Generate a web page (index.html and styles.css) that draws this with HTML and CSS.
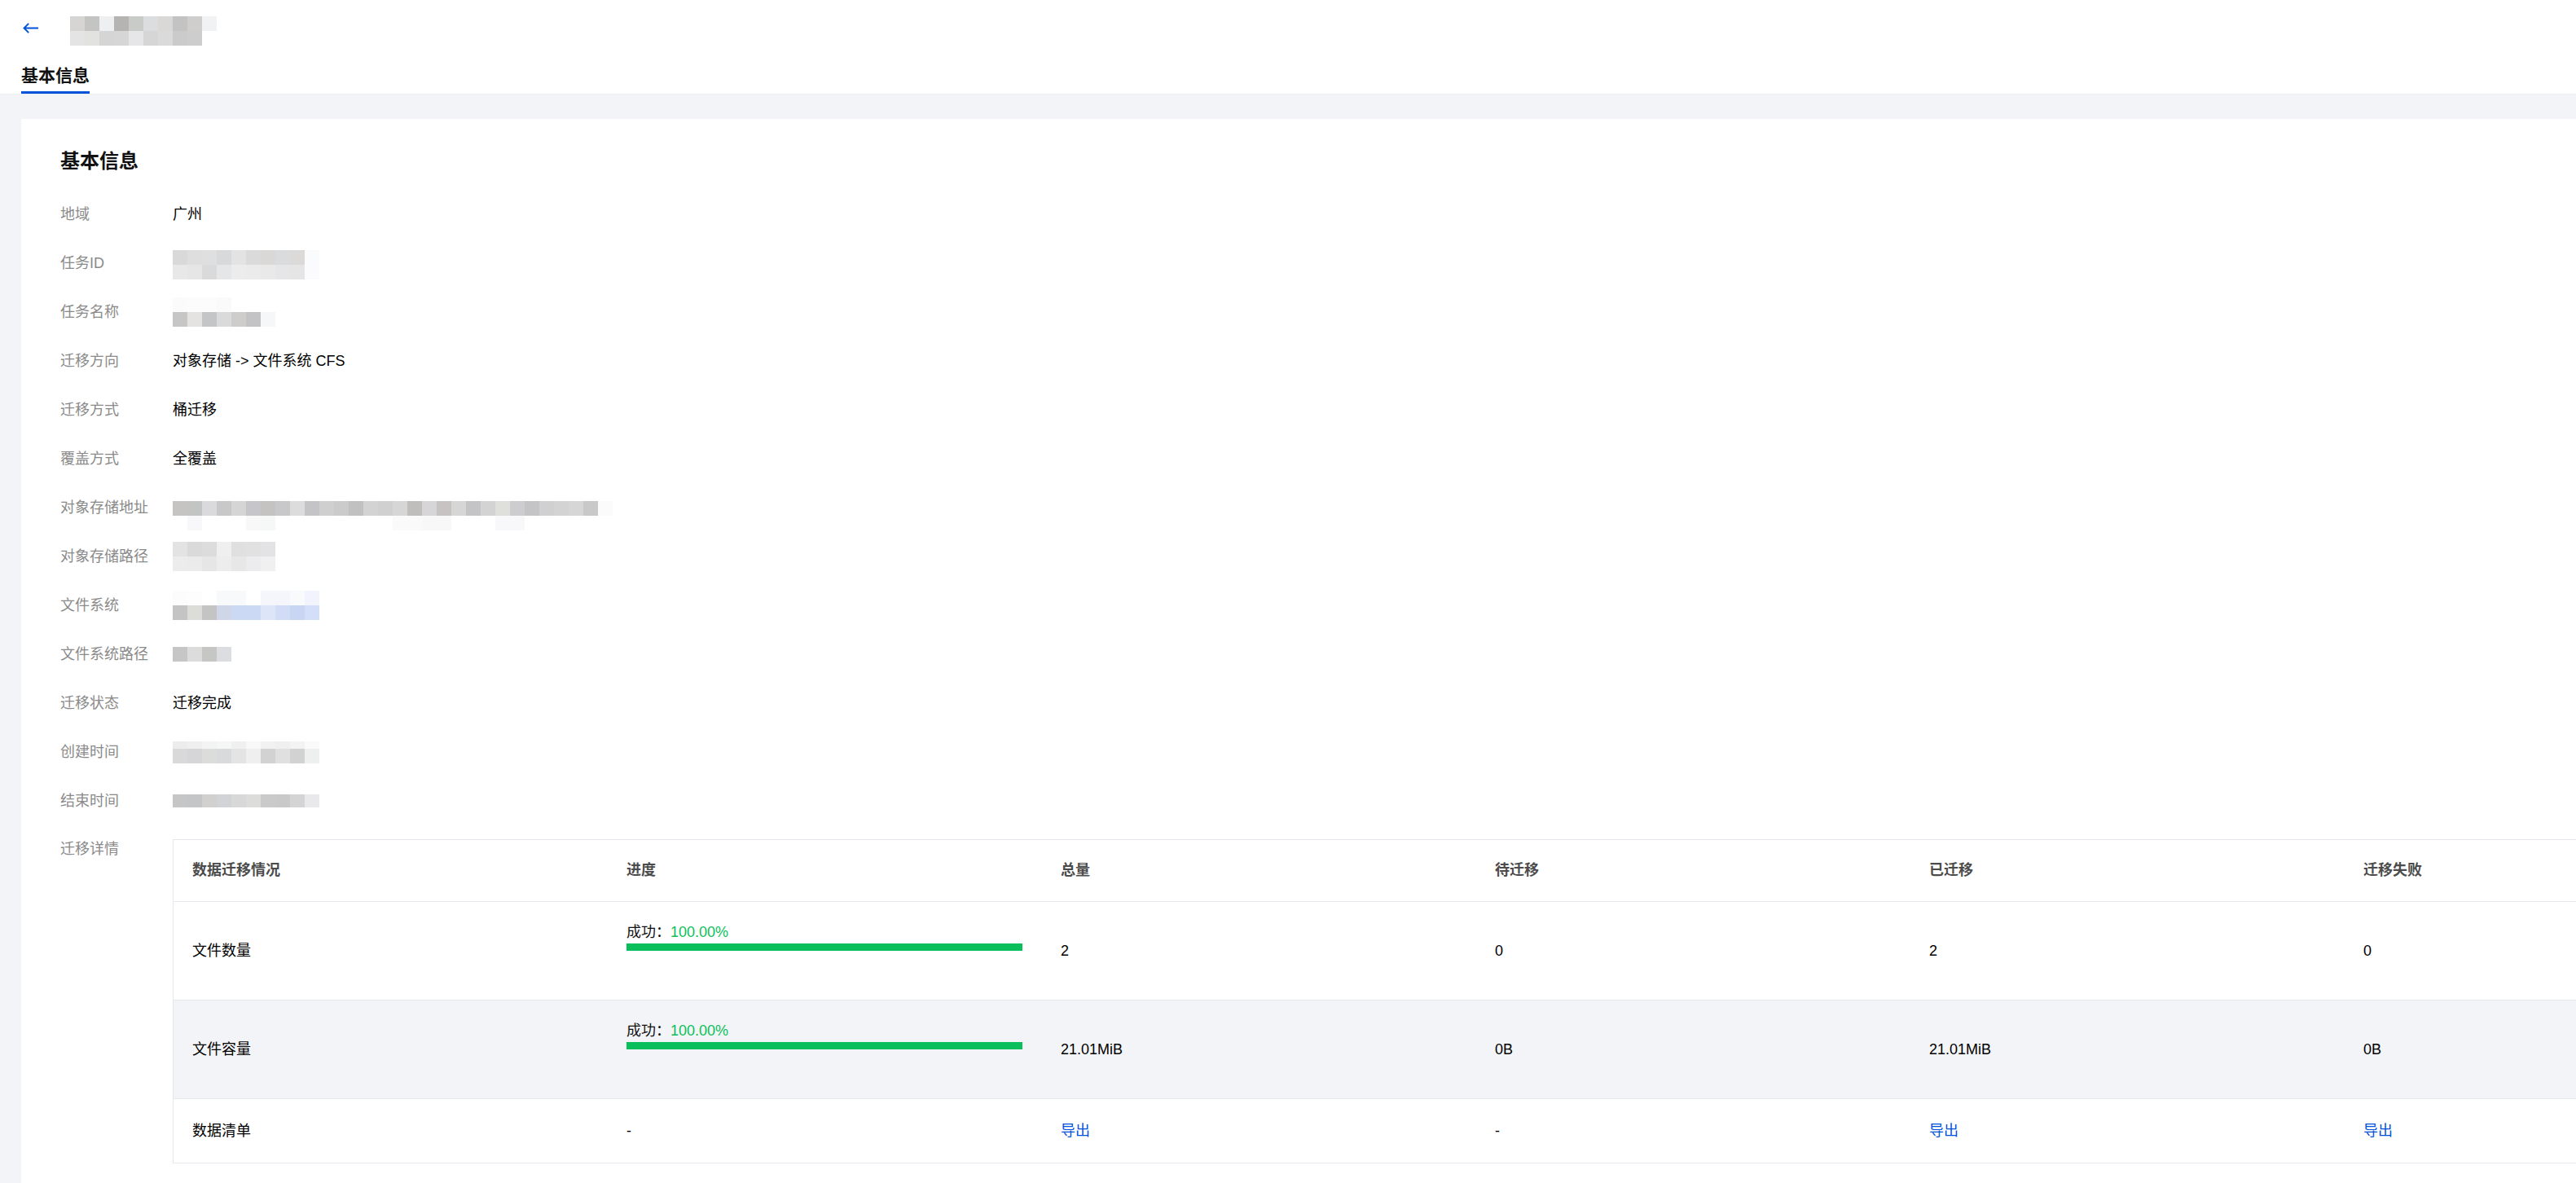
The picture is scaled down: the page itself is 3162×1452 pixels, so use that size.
FILE: index.html
```html
<!DOCTYPE html>
<html lang="zh-CN">
<head>
<meta charset="utf-8">
<title>基本信息</title>
<link rel="stylesheet" href="styles.css">
</head>
<body>
<header class="header">
  <div class="topbar">
    <svg class="back" viewBox="0 0 19 13" aria-hidden="true"><path d="M19 6.5H1.6M7.2 0.8L1.5 6.5L7.2 12.2" fill="none" stroke="#0052d9" stroke-width="1.9"/></svg>
    <span class="mz mz-title" aria-hidden="true"></span>
  </div>
  <nav class="tabs"><span class="tab">基本信息</span></nav>
</header>
<main class="main">
  <section class="card">
    <h2 class="card-title">基本信息</h2>
    <div class="row"><span class="label">地域</span><span class="value">广州</span></div>
    <div class="row"><span class="label">任务ID</span><span class="mz mz-id" aria-hidden="true"></span></div>
    <div class="row"><span class="label">任务名称</span><span class="mz mz-name" aria-hidden="true"></span></div>
    <div class="row"><span class="label">迁移方向</span><span class="value">对象存储 -&gt; 文件系统 CFS</span></div>
    <div class="row"><span class="label">迁移方式</span><span class="value">桶迁移</span></div>
    <div class="row"><span class="label">覆盖方式</span><span class="value">全覆盖</span></div>
    <div class="row"><span class="label">对象存储地址</span><span class="mz mz-addr" aria-hidden="true"></span></div>
    <div class="row"><span class="label">对象存储路径</span><span class="mz mz-path" aria-hidden="true"></span></div>
    <div class="row"><span class="label">文件系统</span><span class="mz mz-fs" aria-hidden="true"></span></div>
    <div class="row"><span class="label">文件系统路径</span><span class="mz mz-fspath" aria-hidden="true"></span></div>
    <div class="row"><span class="label">迁移状态</span><span class="value">迁移完成</span></div>
    <div class="row"><span class="label">创建时间</span><span class="mz mz-ctime" aria-hidden="true"></span></div>
    <div class="row"><span class="label">结束时间</span><span class="mz mz-etime" aria-hidden="true"></span></div>
    <div class="row row-top">
      <span class="label">迁移详情</span>
      <div class="dtable">
        <div class="drow dhead">
          <div class="cell">数据迁移情况</div>
          <div class="cell">进度</div>
          <div class="cell">总量</div>
          <div class="cell">待迁移</div>
          <div class="cell">已迁移</div>
          <div class="cell">迁移失败</div>
        </div>
        <div class="drow dbody">
          <div class="cell">文件数量</div>
          <div class="cell cell-progress">
            <div class="ptext">成功：<span class="pct">100.00%</span></div>
            <div class="pbar"><div class="pfill" style="width:100%"></div></div>
          </div>
          <div class="cell">2</div>
          <div class="cell">0</div>
          <div class="cell">2</div>
          <div class="cell">0</div>
        </div>
        <div class="drow dbody striped">
          <div class="cell">文件容量</div>
          <div class="cell cell-progress">
            <div class="ptext">成功：<span class="pct">100.00%</span></div>
            <div class="pbar"><div class="pfill" style="width:100%"></div></div>
          </div>
          <div class="cell">21.01MiB</div>
          <div class="cell">0B</div>
          <div class="cell">21.01MiB</div>
          <div class="cell">0B</div>
        </div>
        <div class="drow dlast">
          <div class="cell">数据清单</div>
          <div class="cell">-</div>
          <div class="cell"><a class="link" href="#">导出</a></div>
          <div class="cell">-</div>
          <div class="cell"><a class="link" href="#">导出</a></div>
          <div class="cell"><a class="link" href="#">导出</a></div>
        </div>
      </div>
    </div>
  </section>
</main>
</body>
</html>
```
FILE: styles.css
```css
html, body {
  margin: 0;
  padding: 0;
}
body {
  background: #f3f4f7;
  font-family: "Liberation Sans", "Noto Sans CJK SC", sans-serif;
  color: #000;
  overflow: hidden;
}

/* header */
.header {
  background: #fff;
  height: 116px;
  box-sizing: border-box;
  padding-left: 26px;
  border-bottom: 1px solid #eceef2;
}
.topbar {
  display: flex;
  align-items: flex-start;
  padding-top: 20px;
  height: 36px;
}
.back {
  width: 19px;
  height: 13px;
  margin: 8px 39px 0 2px;
  flex-shrink: 0;
}
.tabs {
  margin-top: 22px;
}
.tab {
  display: inline-block;
  font-size: 21px;
  line-height: 30px;
  font-weight: 700;
  padding-bottom: 4px;
  border-bottom: 3px solid #0052d9;
  color: #111;
}

/* main */
.main {
  padding: 30px 0 0 26px;
}
.card {
  background: #fff;
  width: max-content;
  padding: 34px 48px 60px;
}
.card-title {
  font-size: 24px;
  line-height: 36px;
  font-weight: 700;
  margin: 0 0 17px;
  color: #111;
}
.row {
  display: flex;
  align-items: center;
  height: 60px;
  font-size: 18px;
  line-height: 27px;
}
.row-top {
  align-items: flex-start;
  height: auto;
  padding-top: 16px;
}
.label {
  width: 138px;
  flex-shrink: 0;
  color: #8a8a8a;
}
.value {
  color: #000;
}

/* detail table */
.dtable {
  margin-top: 1px;
  border: 1px solid #e7e8ed;
  flex-shrink: 0;
}
.drow {
  display: grid;
  grid-template-columns: repeat(6, 533px);
  align-items: center;
  box-sizing: border-box;
}
.dhead {
  height: 75px;
  font-weight: 700;
  color: #4b4b4b;
}
.dbody {
  height: 121px;
  border-top: 1px solid #e7e8ed;
}
.dlast {
  height: 79px;
  border-top: 1px solid #e7e8ed;
}
.striped {
  background: #f3f4f7;
}
.cell {
  padding-left: 23px;
  white-space: nowrap;
}
.cell-progress {
  align-self: start;
  padding-top: 24px;
}
.ptext {
  color: #111;
}
.pct {
  color: #0abf5b;
}
.pbar {
  width: 486px;
  height: 9px;
  background: #e7e8ed;
}
.pfill {
  height: 100%;
  background: #0abf5b;
}
.link {
  color: #0052d9;
  text-decoration: none;
}

/* masked (mosaic) values */
.mz {
  display: block;
  flex-shrink: 0;
}
.mz-title {
  width: 180px;
  height: 36px;
  background:
    linear-gradient(90deg, #d6d5d3 0 18px, #c4c4c2 0 36px, #eeeff1 0 54px, #b5b4b2 0 72px, #c9cbc9 0 90px, #dcdddf 0 108px, #d9d8d6 0 126px, #c3c3c3 0 144px, #cfcecc 0 162px, #f1f2f4 0 180px) 0 0 / 100% 18px no-repeat,
    linear-gradient(90deg, #e4e4e4 0 18px, #e2e2e0 0 36px, #d5d5d5 0 54px, #d6d6d6 0 72px, #e6e6e8 0 90px, #d6d6d6 0 108px, #dadada 0 126px, #cbcbcb 0 144px, #cdcdcd 0 162px, transparent 0 180px) 0 18px / 100% 18px no-repeat;
}
.mz-id {
  width: 180px;
  height: 36px;
  margin-top: 4px;
  background:
    linear-gradient(90deg, #d9d9d9 0 18px, #dedede 0 36px, #dfdfdf 0 54px, #d8d9db 0 72px, #e3e3e3 0 90px, #dadada 0 108px, #d9d8d6 0 126px, #dadbdd 0 144px, #dcdad8 0 162px, #fafbfd 0 180px) 0 0 / 100% 18px no-repeat,
    linear-gradient(90deg, #e8e8e8 0 18px, #e6e6e6 0 36px, #dadada 0 54px, #e5e6e8 0 72px, #ececec 0 90px, #ebebeb 0 108px, #e9e9e9 0 126px, #e6e6e8 0 144px, #e5e5e5 0 162px, #fbfbfd 0 180px) 0 18px / 100% 18px no-repeat;
}
.mz-name {
  width: 126px;
  height: 36px;
  background:
    linear-gradient(90deg, #fbfbfc 0 18px, #fcfcfd 0 36px, #fcfcfd 0 54px, #fafafb 0 72px, transparent 0 126px) 0 0 / 100% 18px no-repeat,
    linear-gradient(90deg, #c6c6c6 0 18px, #e5e2e2 0 36px, #c4c5c7 0 54px, #dadada 0 72px, #cfcdcc 0 90px, #c3c3c5 0 108px, #f6f7f9 0 126px) 0 18px / 100% 18px no-repeat;
}
.mz-addr {
  width: 540px;
  height: 36px;
  margin-top: 20px;
  background:
    linear-gradient(90deg, #c6c3c3 0 18px, #c3c4c4 0 36px, #dadadc 0 54px, #c8c8c8 0 72px, #d5d5d5 0 90px, #c6c5c9 0 108px, #c5c3c2 0 126px, #c8c8ca 0 144px, #dcdcdc 0 162px, #c4c4c6 0 180px, #cfcfcf 0 198px, #cbcbcb 0 216px, #c1c1c1 0 234px, #d3d3d3 0 252px, #d0d0d0 0 270px, #d6d6d6 0 288px, #bfbebd 0 306px, #d6d6d8 0 324px, #c7c3c3 0 342px, #d6d6d6 0 360px, #c4c4c6 0 378px, #d3d3d3 0 396px, #dfe0dc 0 414px, #cdcdd0 0 432px, #c4c4c6 0 450px, #d0d0d0 0 468px, #d3d3d3 0 486px, #d6d6d6 0 504px, #c9c9c9 0 522px, #fbfbfb 0 540px) 0 0 / 100% 18px no-repeat,
    linear-gradient(90deg, #fff 0 18px, #f8f8fa 0 36px, #fff 0 90px, #f8f8f8 0 108px, #f6f8f8 0 126px, #fff 0 270px, #fafafa 0 306px, #f8f8f8 0 342px, #fff 0 396px, #f8f8fa 0 432px, #fff 0 540px) 0 18px / 100% 18px no-repeat;
}
.mz-path {
  width: 126px;
  height: 36px;
  background:
    linear-gradient(90deg, #e3e3e3 0 18px, #dadada 0 36px, #dcdcdc 0 54px, #efefef 0 72px, #e0e0e0 0 90px, #e1e1e1 0 108px, #e3e3e5 0 126px) 0 0 / 100% 18px no-repeat,
    linear-gradient(90deg, #ececec 0 18px, #ebebeb 0 36px, #e6e6e6 0 54px, #ededed 0 72px, #e7e7e7 0 90px, #ececee 0 108px, #f0f0f0 0 126px) 0 18px / 100% 18px no-repeat;
}
.mz-fs {
  width: 180px;
  height: 36px;
  background:
    linear-gradient(90deg, #fcfcfc 0 18px, #fdfdfd 0 36px, #ffffff 0 54px, #f8f9fb 0 72px, #f8f9fb 0 90px, #ffffff 0 108px, #f4f6fc 0 126px, #f4f6fc 0 144px, #f9fafc 0 162px, #f1f4fc 0 180px) 0 0 / 100% 18px no-repeat,
    linear-gradient(90deg, #c4c4c4 0 18px, #dcdcd9 0 36px, #c4c4c4 0 54px, #cfd6e8 0 72px, #cbd9f4 0 90px, #cbd9f4 0 108px, #dce6f8 0 126px, #d1ddf6 0 144px, #c8d6f4 0 162px, #d3dff8 0 180px) 0 18px / 100% 18px no-repeat;
}
.mz-fspath {
  width: 72px;
  height: 18px;
  background: linear-gradient(90deg, #c6c6c6 0 18px, #dcdcdc 0 36px, #c6c6c4 0 54px, #dcdde0 0 72px);
}
.mz-ctime {
  width: 180px;
  height: 27px;
  background:
    linear-gradient(90deg, #ececec 0 18px, #efefef 0 36px, #f3f3f3 0 54px, #f5f6f6 0 72px, #f0f0f0 0 90px, #f8f8f8 0 108px, #f1f1f1 0 126px, #efefef 0 144px, #f3f3f3 0 162px, #fafafa 0 180px) 0 0 / 100% 9px no-repeat,
    linear-gradient(90deg, #d9d9d9 0 18px, #d6d6d9 0 36px, #dcdcda 0 54px, #d9dadc 0 72px, #e4e4e4 0 90px, #efefef 0 108px, #d2d2d2 0 126px, #e0e0e0 0 144px, #d2d2d2 0 162px, #eeefef 0 180px) 0 9px / 100% 18px no-repeat;
}
.mz-etime {
  width: 180px;
  height: 16px;
  background: linear-gradient(90deg, #c6c6c6 0 18px, #c4c5c7 0 36px, #d1d0ce 0 54px, #d2d3d6 0 72px, #d8d8d8 0 90px, #dcdcda 0 108px, #cacaca 0 126px, #c9c9c9 0 144px, #d4d4d4 0 162px, #e9e9eb 0 180px);
}
```
